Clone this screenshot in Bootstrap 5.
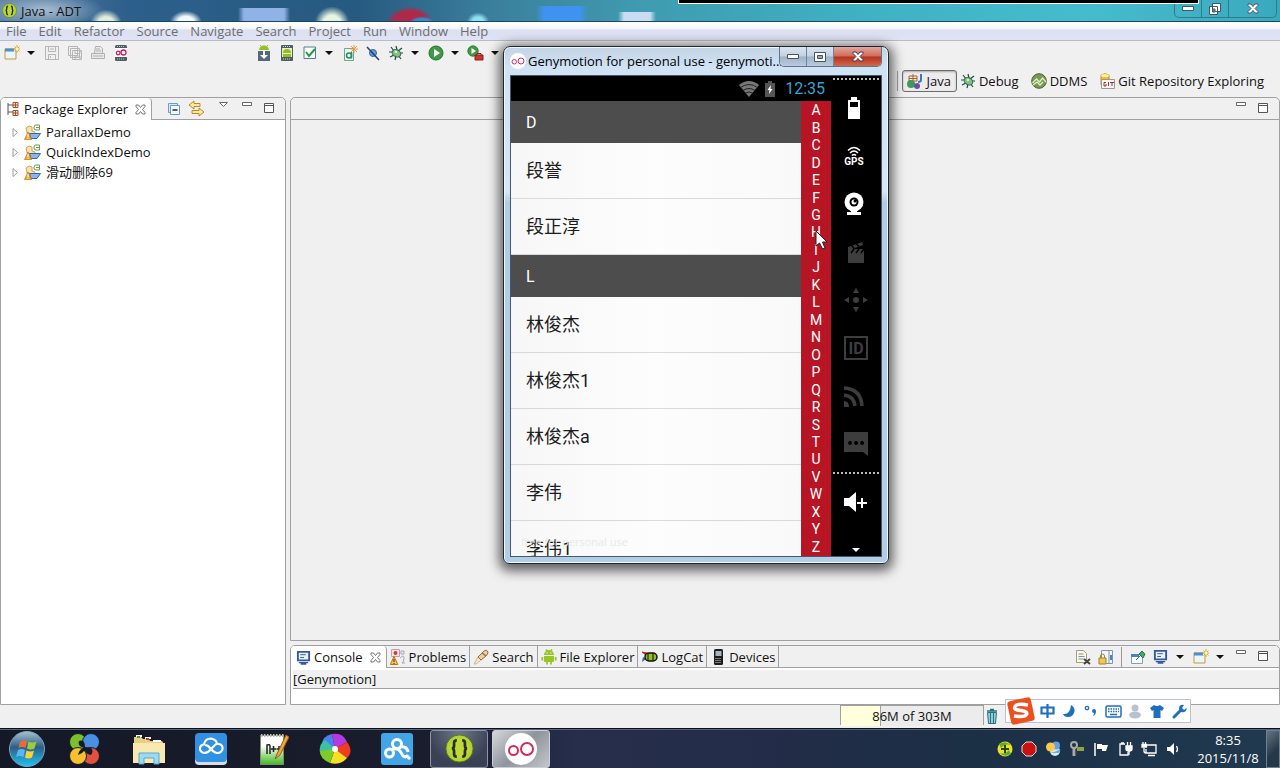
<!DOCTYPE html>
<html lang="en">
<head>
<meta charset="utf-8">
<meta name="viewport" content="width=device-width, initial-scale=1">
<title>Java - ADT</title>
<link href="https://cdn.jsdelivr.net/npm/bootstrap@5.3.0/dist/css/bootstrap.min.css" rel="stylesheet">
<style>
:root { --edge: #a0a0a0; --face: #f0f0f0; }
body { font: 13px/18px "Open Sans", "Noto Sans CJK SC", sans-serif; color: #111; background: var(--face); overflow: hidden; }
button { font: inherit; color: inherit; background: none; border: 0; padding: 0; }
svg { display: block; flex: none; }

.caption-bar { height: 22px; padding-left: 2px; border-bottom: 1px solid #1d4560;
  background:
    radial-gradient(ellipse 20px 18px at 106px 24px, #dfeeda 40%, transparent 80%),
    radial-gradient(ellipse 20px 14px at 186px 22px, #f4f8fa 40%, transparent 80%),
    linear-gradient(90deg, transparent 238px, #8fb3e6 244px, #8fb3e6 284px, transparent 290px) 0 8px no-repeat,
    radial-gradient(ellipse 22px 22px at 332px 24px, #e8f4e2 40%, transparent 80%),
    radial-gradient(ellipse 16px 9px at 422px 24px, #2b8fd0 60%, transparent 85%),
    radial-gradient(ellipse 28px 21px at 410px 24px, #b02848 60%, transparent 85%),
    radial-gradient(ellipse 14px 12px at 478px 22px, #8fe0f0 40%, transparent 80%),
    linear-gradient(90deg, transparent 536px, #3f93f0 544px, #3f93f0 580px, transparent 588px) 0 6px no-repeat,
    linear-gradient(90deg, transparent 618px, #c8ddf3 624px, #c8ddf3 650px, transparent 656px) 0 12px no-repeat,
    radial-gradient(ellipse 60px 18px at 44px 10px, #9db6cc 10%, transparent),
    linear-gradient(90deg, #5c7fa3, #2c5f8b 10%, #275a80 28%, #3a7e9c 38%, #3f9bb0 50%, #3fb2c4 68%, #45bccd 85%, #3ba9bd); }
.caption-buttons { height: 18px; margin-right: 3px; border: 1px solid #2d7c8e; border-top: 0; border-radius: 0 0 5px 5px; }
.caption-buttons button { width: 27px; display: grid; place-items: center; border-right: 1px solid #2d7c8e; }
.caption-buttons button:last-child { width: 47px; border: 0; }
.screen-strip { left: 53%; right: 81px; top: 0; height: 4px; background: #000; border: 1px solid #fff; border-top: 0; }

.menu-strip { height: 19px; color: #6d6d6d; border-bottom: 1px solid #b8bcc8;
  background: linear-gradient(#fff, #f6f7fc 35%, #dce0f2 45%, #dfe3f4); }
.menu-strip a { color: inherit; text-decoration: none; padding: 0 6px; line-height: 19px; }

.tool-row { height: 24px; }
.tool-btn { width: 23px; height: 22px; display: grid; place-items: center; }
.drop-btn { width: 16px; height: 22px; margin-right: 1px; display: grid; place-items: center; }
.tool-space { width: 120px; }
.perspective-row { height: 32px; padding: 4px 16px 4px 0; }
.persp { display: flex; align-items: center; gap: 3px; height: 22px; margin-right: 8px; padding: 0 2px; }
.persp.on { border: 1px solid #6d6d6d; border-radius: 3px; background: #ececec; box-shadow: inset 0 1px 2px #aaa; padding: 0 5px 0 3px; margin-right: 1px; }

.side-pane { width: 286px; }
.pane { border: 1px solid var(--edge); border-radius: 5px 5px 0 0; background: #fff; }
.pane-head { height: 22px; background: var(--face); border-bottom: 1px solid var(--edge); border-radius: 5px 5px 0 0; }
.pane-tab { display: flex; align-items: center; gap: 3px; height: 21px; padding: 0 3px; border-right: 1px solid var(--edge); }
.pane-tab.on { height: 22px; background: #fff; border-radius: 4px 4px 0 0; padding: 0 5px; }
.pane-tab.on .x-mark { margin-left: 4px; }
.tree-list { padding-top: 2px; }
.tree-list li { height: 20px; display: flex; align-items: center; gap: 5px; padding-left: 11px; }
.editor-pane { border-bottom-width: 1px; background: var(--face); }
.console-pane { height: 60px; }
.console-name { background: var(--face); height: 19px; margin-left: 2px; border-bottom: 1px solid var(--edge); line-height: 18px; margin-top: 2px; }
.vsep { width: 1px; height: 20px; background: #9a9a9a; }

.status-row { height: 23px; padding-right: 273px; }
.heap { width: 144px; height: 20px; border: 1px solid var(--edge); border-bottom: 0; position: relative; }
.heap .progress { height: 20px; border-radius: 0; background: #ececec; }
.heap .progress-bar { background: #ffffdc; border-right: 1px solid var(--edge); }
.heap-label { position: absolute; inset: 0; text-align: center; line-height: 20px; }
.ime { right: 89px; bottom: 45px; height: 24px; background: #fff; border: 1px solid #b9c3d4; z-index: 2; }
.ime .tool-btn { width: 22px; }

.task-strip { height: 40px; border-top: 1px solid #0c1017; box-shadow: inset 0 1px #56657c; color: #fff;
  background: linear-gradient(90deg, #151826, #191d2d 35%, #262e4c 45%, #232c48 60%, #1b2f45 75%, #203a50); }
.task { width: 58px; height: 38px; display: grid; place-items: center; border-radius: 3px; }
.task.open { border: 1px solid #8d95a5; background: radial-gradient(circle at 50% 0, #70778a, #3b4154 70%); }
.task.front { border: 1px solid #ccd; background: linear-gradient(135deg, #d5d7da, #8f949b 50%, #c3c6ca); }
.tray { gap: 8px; margin-right: 16px; }
.clock { width: 62px; text-align: center; margin-right: 7px; }
.peek { width: 14px; height: 38px; border: 1px solid #71808d; background: linear-gradient(135deg, #66747f, #24384a 60%); }

/* emulator window floating on the desktop */
.emu { left: 503px; top: 46px; width: 386px; z-index: 3; border: 1px solid #1c2733; border-radius: 7px 7px 6px 6px; padding: 0 6px 6px;
  background: linear-gradient(#c3d3e3, #cfe3f5 20px, #d4e6f7 145px, #b0cde8 155px, #b2cde8);
  box-shadow: inset 0 0 0 1px #f1f8ff, 0 3px 12px 4px rgba(0,0,0,.6); }
.emu-title { height: 28px; }
.emu-title .name { flex: 1; min-width: 0; margin-left: 2px; color: #000; white-space: nowrap; }
.emu-btns { height: 20px; align-self: flex-start; border: 1px solid #5d7590; border-top: 0; border-radius: 0 0 5px 5px; overflow: hidden; }
.emu-btns button { width: 27px; display: grid; place-items: center; border-right: 1px solid #6d839c; background: linear-gradient(#dbe5f0, #c2d0e0 48%, #9fb2c9 52%, #bccbdd); }
.emu-btns button:last-child { width: 47px; border: 0; background: linear-gradient(#e0a79c, #cf6b5b 48%, #b4311f 52%, #cf6a4b); }
.emu-body { height: 482px; background: #000; border: 1px solid #46586c; overflow: hidden; font-family: Roboto, "Noto Sans CJK SC", sans-serif; }
.phone-status { height: 25px; color: #33a5cf; font-size: 16px; padding-right: 6px; gap: 6px; }
.people { --bs-list-group-border-color: #d9d9d9; width: 290px; height: 455px; overflow: hidden; background: #fafafa; color: #1c1c1c; font-size: 18px; }
.people .list-group-item { height: 56px; flex: none; padding: 0 15px; line-height: 55px; background: linear-gradient(90deg, #f7f7f7, #fdfdfd 50%, #f9f9f9); color: inherit; border-width: 0 0 1px; }
.people .list-group-item.letter { height: 42px; line-height: 43px; background: #4d4d4d; color: #fff; font-size: 16px; border: 0; }
.ghost { left: 10px; bottom: 7px; font: 11px/14px "Open Sans", sans-serif; color: #e9e9e9; }
.index-bar { width: 30px; height: 455px; padding-top: 1px; background: #b71424; color: #fff; font-size: 14px; display: grid; grid-template-rows: repeat(26, 1fr); justify-items: center; align-items: center; line-height: 17px; }
.device-keys { flex: 1; padding: 2px 2px 0 2px; color: #3d3d3d; }
.device-keys .dots { border-top: 2px dotted #bbb; width: 100%; flex: none; }
.device-keys button { height: 48px; width: 100%; flex: none; display: grid; place-items: center; }
.device-keys text { font-family: Roboto, sans-serif; font-weight: 700; }
.lit { color: #fff; }
.pointer { left: 304px; top: 154px; }
</style>
</head>
<body class="vh-100 d-flex flex-column">
<svg width="0" height="0" class="position-absolute" aria-hidden="true">
  <defs>
    <linearGradient id="gOrb" x1="0" y1="0" x2="0" y2="1"><stop offset="0" stop-color="#a8c0d0"/><stop offset=".45" stop-color="#2c5f86"/><stop offset="1" stop-color="#1fc4f4"/></linearGradient>
    <linearGradient id="gNote" x1="0" y1="0" x2="0" y2="1"><stop offset=".35" stop-color="#fff"/><stop offset="1" stop-color="#3fb81e"/></linearGradient>
  </defs>
  <symbol id="caret" viewBox="0 0 8 4"><path d="M0 0h8L4 4z" fill="#111"/></symbol>
  <symbol id="newwin" viewBox="0 0 16 16"><path d="M1 4h11v10H1z" fill="#eaf6fc" stroke="#c59a3c"/><path d="M1 3.500h9v3H1z" fill="#4a8fd0"/><path d="M13 0v8M9 4h8M10.500 1.500l5 5M15.500 1.500l-5 5" stroke="#d9a92c"/><circle cx="13" cy="4" r="1.500" fill="#fff6b0"/></symbol>
  <symbol id="bug" viewBox="0 0 16 16"><path d="M8 1l1 4M3 2l3 4M1 7h5M2 12l4-2M7 15l1-4M14 3l-4 3M15 8h-5M13 14l-3-4" stroke="#21483c" stroke-width="1.200"/><ellipse cx="8.500" cy="8" rx="4.500" ry="3.500" fill="#86bf7c" stroke="#2b6a5c" transform="rotate(30 8 8)"/><circle cx="8" cy="7" r="1.300" fill="#d8f0c0"/></symbol>
  <symbol id="run" viewBox="0 0 16 16"><circle cx="8" cy="8" r="7" fill="#3f9a45" stroke="#23702f"/><path d="M6 4l6 4-6 4z" fill="#fff"/></symbol>
  <symbol id="droid" viewBox="0 0 16 16"><path d="M3 6a5 5 0 0 1 10 0zM3 7h10v5a1 1 0 0 1-1 1H4a1 1 0 0 1-1-1z" fill="#9ac42c"/><path d="M5 .500l1.500 2M11 .500l-1.500 2M1.300 8v3.500M14.700 8v3.500M6 12v3.500M10 12v3.500" stroke="#9ac42c" stroke-width="1.800"/><path d="M5.500 4h1M9.500 4h1" stroke="#fff"/></symbol>
  <symbol id="xmark" viewBox="0 0 11 11"><path d="M1 1h2.500l2 2.500L7.500 1H10v1.500L7.500 5.500 10 8.500V10H7.500l-2-2.500-2 2.500H1V8.500l2.500-3L1 2.500z" fill="#fff" stroke="#666" stroke-width=".9"/></symbol>
  <symbol id="pmin" viewBox="0 0 10 5"><path d="M.5.5h9v3h-9z" fill="#fff" stroke="#666"/></symbol>
  <symbol id="pmax" viewBox="0 0 11 11"><path d="M.5.5h9v9h-9zM.5 2.500h9" fill="#fff" stroke="#555"/></symbol>
  <symbol id="screen" viewBox="0 0 16 16"><path d="M2 2h12v9H2z" fill="#e9f2fc" stroke="#345a98" stroke-width="2"/><path d="M4.500 5h6M4.500 8h4" stroke="#345a98"/><path d="M3 13.500h10M5 15h6" stroke="#345a98" stroke-width="1.500"/></symbol>
  <symbol id="proj" viewBox="0 0 17 16"><path d="M2 4l3-2 3 1v4l3 1-1 4-6 1z" fill="#f7e2a9" stroke="#c8a560"/><path d="M5.500 9.500h11l-3.500 5H7z" fill="#8db4ea" stroke="#3964ab"/><path d="M15.500 1h-3.500a2 2 0 0 0-2 2v1a2 2 0 0 0 2 2h3.500V1M12 3.500h3" fill="#fff" stroke="#6b9a4b"/><path d="M4 8l3.500 7.500H.5z" fill="#f3ad2c" stroke="#b97313" stroke-width=".7"/><path d="M4 10v3M4 13.700v1" stroke="#fff"/></symbol>
  <symbol id="adt" viewBox="0 0 32 32"><circle cx="16" cy="16" r="15" fill="#b3d333" stroke="#557317"/><circle cx="16" cy="16" r="11" fill="#c9dc45" opacity=".6"/><path d="M13 7q-3 0-3 3v3q0 3-2.500 3 2.500 0 2.500 3v3q0 3 3 3M19 7q3 0 3 3v3q0 3 2.500 3-2.500 0-2.500 3v3q0 3-3 3" fill="none" stroke="#26301b" stroke-width="3"/></symbol>
  <symbol id="geny" viewBox="0 0 32 32"><circle cx="16" cy="16" r="16" fill="#fff"/><circle cx="8.500" cy="17.500" r="4.500" fill="none" stroke="#d02b5c" stroke-width="2"/><circle cx="22" cy="16" r="6" fill="none" stroke="#d02b5c" stroke-width="2"/></symbol>
</svg>

<header>
  <div class="caption-bar d-flex align-items-center position-relative">
    <svg width="15" height="15"><use href="#adt"/></svg>
    <span class="ms-1 me-auto">Java - ADT</span>
    <span class="screen-strip position-absolute"></span>
    <div class="caption-buttons d-flex align-self-start">
      <button aria-label="Minimize"><svg width="12" height="5"><path d="M.5.5h11v4H.5z" fill="#fff" stroke="#456"/></svg></button>
      <button aria-label="Restore"><svg width="12" height="12"><path d="M3.500.5h8v8h-8zM.5 3.500h8v8h-8z" fill="#fff" stroke="#456"/><path d="M3.500 6h2.500v3H3.500z" fill="#49a" stroke="#456"/></svg></button>
      <button aria-label="Close"><svg width="12" height="11"><path d="M1 1h3l2 2.500L8 1h3v1.500L8 5.500l3 3V10H8L6 7.500 4 10H1V8.500l3-3-3-3z" fill="#fff" stroke="#456"/></svg></button>
    </div>
  </div>
  <nav class="menu-strip d-flex">
    <a href="#">File</a><a href="#">Edit</a><a href="#">Refactor</a><a href="#">Source</a><a href="#">Navigate</a><a href="#">Search</a><a href="#">Project</a><a href="#">Run</a><a href="#">Window</a><a href="#">Help</a>
  </nav>
  <div class="tool-row d-flex align-items-center">
    <button class="tool-btn" aria-label="New"><svg width="16" height="16"><use href="#newwin"/></svg></button><button class="drop-btn" aria-label="New options"><svg width="8" height="4"><use href="#caret"/></svg></button>
    <button class="tool-btn" aria-label="Save"><svg width="16" height="16" fill="none" stroke="#b5b5b5"><path d="M1.500 1.500h13v13h-13zM4.500 1.500v5h7v-5M4.500 14.500v-5h7v5M6.500 11v2M6 4h4"/></svg></button>
    <button class="tool-btn" aria-label="Save all"><svg width="16" height="16" fill="#f0f0f0" stroke="#b5b5b5"><path d="M1.500 1.500h9v9h-9zM3.500 3.500h9v9h-9zM5.500 5.500h9v9h-9zM8 5.500v3h5v-3M8 14v-3h5v3"/></svg></button>
    <button class="tool-btn" aria-label="Print"><svg width="16" height="16" fill="#e9e9e9" stroke="#b0b0b0"><path d="M4.500 8l1-6.500h5l2 2V8M1.500 8.500h13v5h-13zM3 11h10M6 4h4M6 6h5"/></svg></button>
    <button class="tool-btn" aria-label="Genymotion"><svg width="16" height="16"><rect x="2" width="12" height="16" rx="1.500" fill="#4d5d60"/><path d="M2 3h12v9H2z" fill="#fff"/><path d="M4 1.500h8M4 14h8" stroke="#b8c5c5" stroke-dasharray="1"/><circle cx="5.200" cy="8" r="1.800" fill="none" stroke="#d0165b" stroke-width="1.300"/><circle cx="10.500" cy="7.500" r="2.500" fill="none" stroke="#d0165b" stroke-width="1.300"/></svg></button>
    <span class="tool-space"></span>
    <button class="tool-btn" aria-label="SDK Manager"><svg width="16" height="16"><path d="M3 5a5 4.500 0 0 1 10 0z" fill="#97c024"/><path d="M4 0l2 2M12 0l-2 2" stroke="#97c024"/><path d="M2 6h12v10H2z" fill="#56697a"/><path d="M7 6h2v4h3l-4 4-4-4h3z" fill="#fff"/></svg></button>
    <button class="tool-btn" aria-label="AVD Manager"><svg width="16" height="16"><rect x="2" width="12" height="16" rx="1" fill="#4d5d66"/><path d="M3 3h10v9H3z" fill="#e7f2c3"/><path d="M4 8a4 4 0 0 1 8 0zM4 9h8v3H4z" fill="#94bd22"/><path d="M4 1.500h8M4 14h8" stroke="#c8d5d5" stroke-dasharray="1"/></svg></button>
    <button class="tool-btn" aria-label="Lint"><svg width="14" height="14"><path d="M1 1h11.500v11.500H1z" fill="#fff" stroke="#4b7f9e"/><path d="M3 6l3 4 6-7" fill="none" stroke="#1f9b3f" stroke-width="2"/></svg></button><button class="drop-btn" aria-label="Lint options"><svg width="8" height="4"><use href="#caret"/></svg></button>
    <button class="tool-btn" aria-label="New test"><svg width="16" height="16"><path d="M2.500 3.500h9v12h-9z" fill="#eaf6f0" stroke="#6aa58e"/><circle cx="7" cy="10.500" r="2.500" fill="none" stroke="#2a8c66" stroke-width="1.500"/><path d="M9.500 7v6.500" stroke="#2a8c66" stroke-width="1.500"/><path d="M12 0v8M8 4h8M9 1l6 6M15 1L9 7" stroke="#e89a45"/></svg></button>
    <button class="tool-btn" aria-label="Skip breakpoints"><svg width="16" height="16"><circle cx="8" cy="8" r="3.500" fill="#6d9bd2" stroke="#36639d"/><path d="M2 2l12 13" stroke="#22416d" stroke-width="1.500"/></svg></button>
    <button class="tool-btn" aria-label="Debug"><svg width="16" height="16"><use href="#bug"/></svg></button><button class="drop-btn" aria-label="Debug options"><svg width="8" height="4"><use href="#caret"/></svg></button>
    <button class="tool-btn" aria-label="Run"><svg width="16" height="16"><use href="#run"/></svg></button><button class="drop-btn" aria-label="Run options"><svg width="8" height="4"><use href="#caret"/></svg></button>
    <button class="tool-btn" aria-label="External tools"><svg width="17" height="17"><use href="#run" width="12" height="12"/><path d="M8 10h8v5H8z" fill="#cf3434" stroke="#8e1d1d"/><path d="M10 10V8.500h4V10" fill="none" stroke="#8e1d1d"/></svg></button><button class="drop-btn" aria-label="External tools options"><svg width="8" height="4"><use href="#caret"/></svg></button>
  </div>
  <div class="perspective-row d-flex align-items-center justify-content-end">
    <span class="vsep me-1"></span>
    <button class="persp on"><svg width="17" height="17"><path d="M3 3h8v5H3zM7 1v8M3 5.500h8" fill="#fbe5c8" stroke="#a4603a"/><path d="M15 1v6q0 2-3 2" fill="none" stroke="#3d78b8" stroke-width="2"/><circle cx="5" cy="11" r="4" fill="#3f9a56"/><circle cx="11" cy="13" r="3" fill="#6653a5"/></svg>Java</button>
    <button class="persp"><svg width="16" height="16"><use href="#bug"/></svg>Debug</button>
    <button class="persp"><svg width="16" height="16"><circle cx="8" cy="8" r="7.300" fill="#789a4f" stroke="#4d5f3b"/><path d="M1.500 10l4-4 3 3 3-4 3.500 4M2 12l4-3 3 3 3-3" fill="none" stroke="#e4edcf" stroke-width="1.300"/></svg>DDMS</button>
    <button class="persp me-0 pe-0"><svg width="16" height="16"><path d="M2 2q4-2.500 8 0v10H2z" fill="#f4ba32" stroke="#c98c15"/><ellipse cx="6" cy="2.500" rx="4" ry="1.500" fill="#fff0a8"/><path d="M2.500 6.500h13v9h-13z" fill="#f5f5f5" stroke="#999"/><path d="M7 9.500H5v3.500h2v-2M9.500 9v4M11 9.500h4M13 9.500V13" stroke="#933" fill="none"/></svg>Git Repository Exploring</button>
  </div>
</header>

<main class="flex-grow-1 d-flex gap-1" style="min-height:0">
  <section class="pane side-pane d-flex flex-column">
    <div class="pane-head d-flex">
      <button class="pane-tab on"><svg width="15" height="16"><path d="M2 2v12M2 4h5M2 11h5" stroke="#555" fill="none"/><path d="M7 1.500h5v5H7zM9.500 1.500v5M7 4h5M7 9.500h5v5H7zM9.500 9.500v5M7 12h5" fill="#fbe9cf" stroke="#a4512a"/></svg>Package Explorer<svg class="x-mark" width="11" height="11"><use href="#xmark"/></svg></button>
      <div class="d-flex ms-auto align-items-center">
        <button class="tool-btn" aria-label="Collapse all"><svg width="14" height="14"><path d="M1.500 1.500h9v9h-9z" fill="#dbeaf8" stroke="#6a9cc8"/><path d="M3.500 3.500h9v9h-9z" fill="#f4faff" stroke="#6a9cc8"/><path d="M5.500 8h5" stroke="#225" stroke-width="1.500"/></svg></button>
        <button class="tool-btn" aria-label="Link with editor"><svg width="17" height="17"><path d="M1 5l5-4v2.500h6v3H6V9zM16 12l-5-4v2.500H4v3h7V16z" fill="#fbe7a8" stroke="#bd8a1e"/></svg></button>
        <button class="tool-btn ms-1 me-n1 mb-2" aria-label="View menu"><svg width="9" height="6"><path d="M.5.5h8l-4 4z" fill="#fff" stroke="#666"/></svg></button>
        <button class="tool-btn mb-2" aria-label="Minimize view"><svg width="10" height="5"><use href="#pmin"/></svg></button>
        <button class="tool-btn me-1" aria-label="Maximize view"><svg width="11" height="11"><use href="#pmax"/></svg></button>
      </div>
    </div>
    <ul class="tree-list list-unstyled mb-0">
      <li><svg width="7" height="9"><path d="M1 .500v8l4.500-4z" fill="#fff" stroke="#999"/></svg><svg width="17" height="16"><use href="#proj"/></svg>ParallaxDemo</li>
      <li><svg width="7" height="9"><path d="M1 .500v8l4.500-4z" fill="#fff" stroke="#999"/></svg><svg width="17" height="16"><use href="#proj"/></svg>QuickIndexDemo</li>
      <li><svg width="7" height="9"><path d="M1 .500v8l4.500-4z" fill="#fff" stroke="#999"/></svg><svg width="17" height="16"><use href="#proj"/></svg>滑动删除69</li>
    </ul>
  </section>
  <div class="flex-grow-1 d-flex flex-column gap-1" style="min-width:0">
    <section class="pane editor-pane flex-grow-1">
      <div class="pane-head d-flex justify-content-end align-items-center">
        <button class="tool-btn mb-2" aria-label="Minimize editor"><svg width="10" height="5"><use href="#pmin"/></svg></button>
        <button class="tool-btn me-1" aria-label="Maximize editor"><svg width="11" height="11"><use href="#pmax"/></svg></button>
      </div>
    </section>
    <section class="pane console-pane">
      <div class="pane-head d-flex">
        <button class="pane-tab on"><svg width="15" height="15"><use href="#screen"/></svg>Console<svg class="x-mark" width="11" height="11"><use href="#xmark"/></svg></button>
        <button class="pane-tab"><svg width="16" height="16"><path d="M1.500.5h8v7h-8z" fill="#f7e5e7" stroke="#bfa2a8"/><circle cx="5.500" cy="4" r="2" fill="#d33"/><path d="M11 2h3v3h-3zM10 9q4-4 4 0t-2 5h3" fill="none" stroke="#9ab"/><path d="M4 7.500l3.800 8H.3z" fill="#f8c451" stroke="#b97313"/><path d="M4 10v3M4 14v1" stroke="#333"/></svg>Problems</button>
        <button class="pane-tab"><svg width="16" height="16"><path d="M1 15l4-7 3 3-5 4z" fill="#f3ead0" stroke="#c4b68f"/><path d="M5 8l6-6q3-2 4 1 0 2-2 4l-5 4z" fill="#f0cf9c" stroke="#9a6a32"/><path d="M9 4l4 3" stroke="#777" stroke-width="1.500"/></svg>Search</button>
        <button class="pane-tab"><svg width="16" height="16"><use href="#droid"/></svg>File Explorer</button>
        <button class="pane-tab"><svg width="17" height="14"><path d="M1 2l5 1v3z" fill="#d22" stroke="#d22"/><path d="M1 12l4-3-3-2z" fill="#26c"/><rect x="4" y="3" width="12" height="8" rx="4" fill="#93bd2a" stroke="#111" stroke-width="1.500"/><path d="M7 3v8M12 3v8" stroke="#111"/></svg>LogCat</button>
        <button class="pane-tab"><svg width="16" height="16"><rect x="4" y="0" width="9" height="16" rx="1.500" fill="#1c1c1c"/><path d="M5.500 2h6v5h-6z" fill="#a9b4be"/><path d="M5.500 9.500h6M5.500 11.500h6M5.500 13.500h6" stroke="#ddd" stroke-dasharray="1"/></svg>Devices</button>
        <div class="d-flex ms-auto align-items-center">
          <button class="tool-btn" aria-label="Clear console"><svg width="16" height="16"><path d="M1.500 1.500h7l3 3v9h-10z" fill="#fbf8e6" stroke="#a59d77"/><path d="M3.500 5h5M3.500 7.500h6M3.500 10h5" stroke="#7590b5"/><path d="M9 10l6 5M15 10l-6 5" stroke="#444" stroke-width="2"/></svg></button>
          <button class="tool-btn" aria-label="Scroll lock"><svg width="16" height="16"><path d="M3.500 1.500h11v13h-11zM11 1.500v13" fill="#f1f6fb" stroke="#7896b5"/><path d="M12 6h2v5h-2z" fill="#4f7fc0"/><path d="M2.500 9V7a2 2 0 0 1 4 0v2" fill="none" stroke="#a6812a"/><path d="M1 9h7v6H1z" fill="#f2c850" stroke="#a6812a"/></svg></button>
          <span class="vsep mx-1"></span>
          <button class="tool-btn" aria-label="Pin console"><svg width="16" height="16"><path d="M1.500 5.500h11v9h-11z" fill="#fff" stroke="#7aa0c5"/><path d="M1 5h8v3H1z" fill="#4a83c4"/><path d="M6 11l4-4M9 5l4 4 2-4-3-3z" fill="#4ca65c" stroke="#2a7a3a"/></svg></button>
          <button class="tool-btn" aria-label="Display console"><svg width="15" height="15"><use href="#screen"/></svg></button><button class="drop-btn" aria-label="Console list"><svg width="8" height="4"><use href="#caret"/></svg></button>
          <button class="tool-btn" aria-label="Open console"><svg width="16" height="16"><use href="#newwin"/></svg></button><button class="drop-btn" aria-label="Open console options"><svg width="8" height="4"><use href="#caret"/></svg></button>
          <button class="tool-btn mb-2" aria-label="Minimize view"><svg width="10" height="5"><use href="#pmin"/></svg></button>
          <button class="tool-btn me-1" aria-label="Maximize view"><svg width="11" height="11"><use href="#pmax"/></svg></button>
        </div>
      </div>
      <div class="console-name">[Genymotion]</div>
    </section>
  </div>
</main>

<div class="status-row d-flex justify-content-end">
  <div class="heap"><div class="progress" role="progressbar" aria-label="Heap"><div class="progress-bar" style="width:28.4%"></div></div><span class="heap-label">86M of 303M</span></div>
  <button class="tool-btn" aria-label="Run garbage collector"><svg class="me-2" width="12" height="16"><path d="M1 3h10M4 1.500h4" stroke="#2e6f80" stroke-width="1.500"/><path d="M1.500 4.500h9l-1 11h-7z" fill="#8ed0d8" stroke="#2e6f80"/><path d="M4.500 5v10M7.500 5v10" stroke="#2e6f80"/></svg></button>
</div>

<div class="ime position-absolute d-flex align-items-center">
  <svg class="mt-n1" width="30" height="30" viewBox="0 0 30 30"><rect x="3" y="3" width="24" height="24" rx="3" fill="#ee4f1e" transform="rotate(-12 15 15)"/><path d="M22 9q-11-2-13 1.500T15 14.500q7 1 5.500 4T8 20" fill="none" stroke="#fff" stroke-width="3.500"/></svg>
  <button class="tool-btn" aria-label="Chinese mode"><svg width="15" height="16" fill="none" stroke="#1f6fc0" stroke-width="2.200"><path d="M1.500 4.500h12v6h-12zM7.500 1v14"/></svg></button>
  <button class="tool-btn" aria-label="Half width"><svg width="14" height="14"><path d="M9 1q4 2 3.500 6.500Q11 13 6 13q-4 0-5-3 7 1 8-9z" fill="#1f6fc0"/></svg></button>
  <button class="tool-btn" aria-label="Punctuation"><svg width="14" height="14"><circle cx="3" cy="4" r="1.700" fill="none" stroke="#1f6fc0" stroke-width="1.300"/><path d="M8 7a2 2 0 1 1 4 0q0 4-3 5 1-1.500 1-3-2 0-2-2z" fill="#1f6fc0"/></svg></button>
  <button class="tool-btn" aria-label="Soft keyboard"><svg width="17" height="13"><rect x="1" y="1" width="15" height="11" rx="1.500" fill="none" stroke="#1f6fc0" stroke-width="1.500"/><path d="M3 4h11M3 6.500h11" stroke="#1f6fc0" stroke-width="1.500" stroke-dasharray="1.500 1"/><path d="M5 9.500h7" stroke="#1f6fc0" stroke-width="1.500"/></svg></button>
  <button class="tool-btn" aria-label="Account"><svg width="14" height="15" fill="#b9c1d0"><circle cx="7" cy="4" r="3.500"/><ellipse cx="7" cy="11" rx="6" ry="3.500"/></svg></button>
  <button class="tool-btn" aria-label="Skin"><svg width="14" height="14"><path d="M4 1q3 2 6 0l4 3-2 3-1.500-1v8h-7V6L2 7 0 4z" fill="#1f6fc0"/></svg></button>
  <button class="tool-btn" aria-label="Tools"><svg width="15" height="15"><path d="M2 13l7-7" stroke="#1f6fc0" stroke-width="3" stroke-linecap="round"/><path d="M12 1Q7 0 7 5q1 4 5 3 3-1 2.500-4L12 6l-2-2z" fill="#1f6fc0"/></svg></button>
</div>

<footer class="task-strip d-flex align-items-center">
  <button class="task" aria-label="Start"><svg width="38" height="38" class="me-1"><circle cx="19" cy="19" r="17.500" fill="url(#gOrb)" stroke="#7fa6bd"/><path d="M12 12q4-3 7-1l-1.500 7q-4-2-7 0z" fill="#ef6a32"/><path d="M20.500 11.500q4 2 8 0l-2 7q-4 2-7.500 0z" fill="#9ccb3b"/><path d="M10 20q4-2 7 0l-1.500 7q-4-2-7.500 0z" fill="#5bb5ee"/><path d="M18.500 20.500q4 2 7.500 0l-2 7q-4 2-7 0z" fill="#fbd03a"/></svg></button>
  <button class="task" aria-label="Assistant"><svg width="32" height="32" class="me-1"><g stroke="#161b29"><circle cx="9" cy="9" r="8.500" fill="#7cc02c"/><circle cx="22" cy="9" r="8.500" fill="#4a90e2"/><circle cx="22" cy="23" r="8.500" fill="#e2513f"/><circle cx="9" cy="23" r="8.500" fill="#f6c02e"/></g><path d="M15 15Q8 13 10 8q6-2 6 6 2 0 6 1 3 3 0 7-6-1-6-5-2 3-7 5 1-6 6-7z" fill="#161b29"/></svg></button>
  <button class="task ms-1" aria-label="File Explorer"><svg width="34" height="32"><path d="M2 6V4h7l2 2h6l1 2h12l2 3v19H2z" fill="#e8cf82"/><path d="M4 3h6M13 5h6M21 8h8" stroke="#fff" stroke-width="2"/><path d="M5 4h3" stroke="#3a9b3f" stroke-width="2"/><path d="M14 6h3" stroke="#c33" stroke-width="2"/><path d="M1 10h32v20H1z" fill="#f8e9b0"/><path d="M7 31V20h20v11h-5v-6H12v6z" fill="#9fd8f2" stroke="#57a9d3"/></svg></button>
  <button class="task ms-1" aria-label="Cloud"><svg width="32" height="32"><rect y="3" width="32" height="29" rx="4" fill="#d8dde2"/><rect width="32" height="29" rx="4" fill="#3190e2"/><path d="M16 16q-3 4-7 4-4-1-4-4.500T9 11.500q1-6 7-6 6 1 6 6M16 16l3-3q2-3 5-2 4 1 3.500 5-1 4-5 4-3 0-6.500-4-3-4-6-4" fill="none" stroke="#fff" stroke-width="2.200"/></svg></button>
  <button class="task ms-1" aria-label="Notepad++"><svg width="32" height="32"><path d="M3.500 2.500h23v29h-23z" fill="url(#gNote)" stroke="#7b8c69"/><path d="M4 2.500h23" stroke="#bbb" stroke-width="3" stroke-dasharray="1.500"/><path d="M10 21v-9q3-1 3 1v8M16.500 13v6M14 16h5M22 13v6M19.500 16h5" fill="none" stroke="#222" stroke-width="1.500"/><path d="M18 26l2-5 9-19 3 2-9 18z" fill="#efa937" stroke="#9c5a17"/></svg></button>
  <button class="task ms-1" aria-label="Gallery"><svg width="32" height="32"><path d="M16 16L3 12Q3 3 13 1z" fill="#4d7ff0"/><path d="M16 16L13 1q11-2 15 8z" fill="#b53be0"/><path d="M16 16l12-7q7 9 0 16z" fill="#f13b23"/><path d="M16 16l12 9q-7 8-17 5z" fill="#f9df24"/><path d="M16 16l-5 14Q-1 25 1 15z" fill="#7ccd29"/><path d="M16 16L1 18q-1-7 5-11z" fill="#3bc2a0"/><circle cx="16" cy="16" r="3" fill="#fff"/></svg></button>
  <button class="task ms-1" aria-label="Cloud drive"><svg width="32" height="32"><rect width="32" height="32" rx="3" fill="#42a5e6"/><circle cx="8.500" cy="20" r="4" fill="none" stroke="#fff" stroke-width="3"/><circle cx="16" cy="11" r="4.500" fill="none" stroke="#fff" stroke-width="3"/><path d="M11 17q5-3 8 1l3 5q3 2 5-1M19 14q7-1 8 5" fill="none" stroke="#fff" stroke-width="3"/><circle cx="28" cy="25" r="1.800" fill="#fff"/></svg></button>
  <button class="task open ms-1" aria-label="ADT"><svg width="29" height="29"><use href="#adt"/></svg></button>
  <button class="task front ms-1" aria-label="Genymotion"><svg width="32" height="32"><use href="#geny"/></svg></button>
  <div class="tray d-flex ms-auto">
    <svg width="16" height="16"><circle cx="8" cy="8" r="7.500" fill="#f6dc23"/><path d="M2 3q6-4 12 1-6-2-10 3zM14 13q-6 4-12-1 6 2 10-3z" fill="#5cae2c"/><path d="M8 4v8M4 8h8" stroke="#194a10" stroke-width="2"/></svg>
    <svg width="16" height="16"><path d="M5 1h6l4 4v6l-4 4H5l-4-4V5z" fill="#cc1111" stroke="#ddd"/></svg>
    <svg width="16" height="16"><circle cx="10" cy="10" r="5" fill="#d6ebf8"/><circle cx="11" cy="4.500" r="4" fill="#5ca3e2"/><circle cx="5.500" cy="6" r="4.500" fill="#ffc84a"/><path d="M3 12h10q3 0 2-4-6 4-12 4z" fill="#68aee5"/></svg>
    <svg width="16" height="16"><circle cx="5" cy="4" r="3" fill="none" stroke="#aaa" stroke-width="2"/><path d="M5 6v9" stroke="#aaa" stroke-width="3"/><path d="M8 6h7v4H8z" fill="#8ea545"/><path d="M7 8v6" stroke="#444"/></svg>
    <svg width="16" height="16"><path d="M2 2v13" stroke="#fff" stroke-width="1.500"/><path d="M4 3h5v1h6l-2 6H9V8H4z" fill="#fff"/></svg>
    <svg width="16" height="16" fill="none" stroke="#fff" stroke-width="1.300"><path d="M8 3H3v11h8v-3M4 2h3"/><path d="M9 5h6v3q0 2-3 2t-3-2z" fill="#fff"/><path d="M10.500 1v4M13.500 1v4M12 10v4"/></svg>
    <svg width="16" height="16" fill="none" stroke="#fff" stroke-width="1.300"><path d="M6 4h9v8H5v-4M7 14.500h7M3 7v3q0 2 2 2"/><path d="M1 3.500h4.500V6H1zM2 1v2M4.500 1v2" fill="#fff"/></svg>
    <svg width="16" height="16"><path d="M2 6h3l4-4v12l-4-4H2z" fill="#fff"/><path d="M11.500 5q2 3 0 6" fill="none" stroke="#fff" stroke-width="1.300"/></svg>
  </div>
  <div class="clock">8:35<br>2015/11/8</div>
  <button class="peek" aria-label="Show desktop"></button>
</footer>

<section class="emu position-absolute" aria-label="Genymotion window">
  <div class="emu-title d-flex align-items-center">
    <svg width="16" height="16"><use href="#geny"/></svg>
    <span class="name">Genymotion for personal use - genymoti...</span>
    <div class="emu-btns d-flex">
      <button aria-label="Minimize"><svg width="12" height="5"><path d="M.5.5h11v4H.5z" fill="#fff" stroke="#456"/></svg></button>
      <button aria-label="Maximize"><svg width="12" height="10"><path d="M.5.5h11v9H.5z" fill="#fff" stroke="#456"/><path d="M3.500 3.500h5v3h-5z" fill="#9ab" stroke="#456"/></svg></button>
      <button aria-label="Close"><svg width="12" height="11"><path d="M1 1h3l2 2.500L8 1h3v1.500L8 5.500l3 3V10H8L6 7.500 4 10H1V8.500l3-3-3-3z" fill="#fff" stroke="#534"/></svg></button>
    </div>
  </div>
  <div class="emu-body d-flex position-relative">
    <div>
      <div class="phone-status d-flex align-items-center justify-content-end">
        <svg width="20" height="16"><path d="M0 4q10-8 20 0L10 16z" fill="#777"/><path d="M1.500 6.500q8.500-6 17 0M4 9.500q6-4 12 0M6.500 12q3.500-2 7 0" fill="none" stroke="#222" stroke-width="1"/></svg>
        <svg width="10" height="16"><path d="M0 2h3V0h4v2h3v14H0z" fill="#555"/><path d="M6 4L2.500 9h2L4 13l3.500-5h-2z" fill="#fff"/></svg>
        <span class="ms-1">12:35</span>
      </div>
      <div class="d-flex">
        <ul class="people list-group list-group-flush position-relative">
          <li class="list-group-item letter">D</li>
          <li class="list-group-item">段誉</li>
          <li class="list-group-item">段正淳</li>
          <li class="list-group-item letter">L</li>
          <li class="list-group-item">林俊杰</li>
          <li class="list-group-item">林俊杰1</li>
          <li class="list-group-item">林俊杰a</li>
          <li class="list-group-item">李伟</li>
          <li class="list-group-item">李伟1</li>
        </ul>
        <div class="index-bar"><span>A</span><span>B</span><span>C</span><span>D</span><span>E</span><span>F</span><span>G</span><span>H</span><span>I</span><span>J</span><span>K</span><span>L</span><span>M</span><span>N</span><span>O</span><span>P</span><span>Q</span><span>R</span><span>S</span><span>T</span><span>U</span><span>V</span><span>W</span><span>X</span><span>Y</span><span>Z</span></div>
      </div>
    </div>
    <div class="device-keys d-flex flex-column align-items-center">
      <span class="dots"></span>
      <button class="mt-1 lit" aria-label="Battery"><svg width="14" height="22" class="me-1"><path d="M1 3h3V0h6v3h3v19H1z" fill="#fff"/><path d="M3 5h8v5H3z"/></svg></button>
      <button class="lit" aria-label="GPS"><svg width="22" height="20" class="me-1" fill="none" stroke="#fff" stroke-width="1.600"><path d="M5 4.500q6-6 12 0M7 7q4-4 8 0M9 9.500q2-2 4 0"/><text x="11" y="19" text-anchor="middle" font-size="10" fill="#fff" stroke="none">GPS</text></svg></button>
      <button class="lit" aria-label="Camera"><svg width="20" height="24" class="me-1"><circle cx="10" cy="10" r="9.500" fill="#fff"/><circle cx="10" cy="10" r="4.500"/><circle cx="10" cy="10" r="2.500" fill="#fff"/><circle cx="11" cy="9" r="1.500"/><path d="M7 18h6v2h4v3H3v-3h4z" fill="#fff"/></svg></button>
      <button aria-label="Screencast"><svg width="18" height="22"><path d="M1 6l14-5 1 3-11 4h12v14H1z" fill="currentColor"/><path d="M4 4l3 3M9 2.500l3 3M4 12l3-4M9 12l3-4M14 12l3-4" stroke="#000" stroke-width="1.500"/></svg></button>
      <button aria-label="Move"><svg width="24" height="24" fill="currentColor"><circle cx="12" cy="12" r="3"/><path d="M12 0l3 5H9zM12 24l3-5H9zM0 12l5-3v6zM24 12l-5-3v6z"/></svg></button>
      <button aria-label="Identifiers"><svg width="24" height="24" fill="none" stroke="currentColor" stroke-width="2"><path d="M1 1h22v22H1z"/><text x="12" y="18" text-anchor="middle" font-size="16" fill="currentColor" stroke="none">ID</text></svg></button>
      <button aria-label="Network"><svg width="22" height="22" class="me-1" fill="none" stroke="currentColor" stroke-width="3.500"><path d="M1 3q17 1 18 18M1 10q10 1 11 11"/><path d="M1 16q5 0 5 6H1z" fill="currentColor" stroke="none"/></svg></button>
      <button aria-label="Messages"><svg width="24" height="24"><path d="M0 0h24v24l-5-4H0z" fill="currentColor"/><path d="M6 9a2 2 0 1 0 .1 0M12 9a2 2 0 1 0 .1 0M18 9a2 2 0 1 0 .1 0"/></svg></button>
      <span class="dots mt-1"></span>
      <button class="mt-1 lit" aria-label="Volume up"><svg width="26" height="22"><path d="M1 7h5l7-6v20l-7-6H1zM18 7h2v4h4v2h-4v4h-2v-4h-4v-2h4z" fill="#fff"/></svg></button>
      <button class="lit" aria-label="More"><svg width="8" height="4"><path d="M0 0h8L4 4z" fill="#fff"/></svg></button>
    </div>
    <span class="ghost position-absolute">free for personal use</span>
    <svg class="pointer position-absolute" width="13" height="20"><path d="M1 1v15l3.500-3 3 6 2.500-1-2.500-6H12z" fill="#fff" stroke="#222"/></svg>
  </div>
</section>
<script src="https://cdn.jsdelivr.net/npm/bootstrap@5.3.0/dist/js/bootstrap.bundle.min.js"></script>
</body>
</html>
